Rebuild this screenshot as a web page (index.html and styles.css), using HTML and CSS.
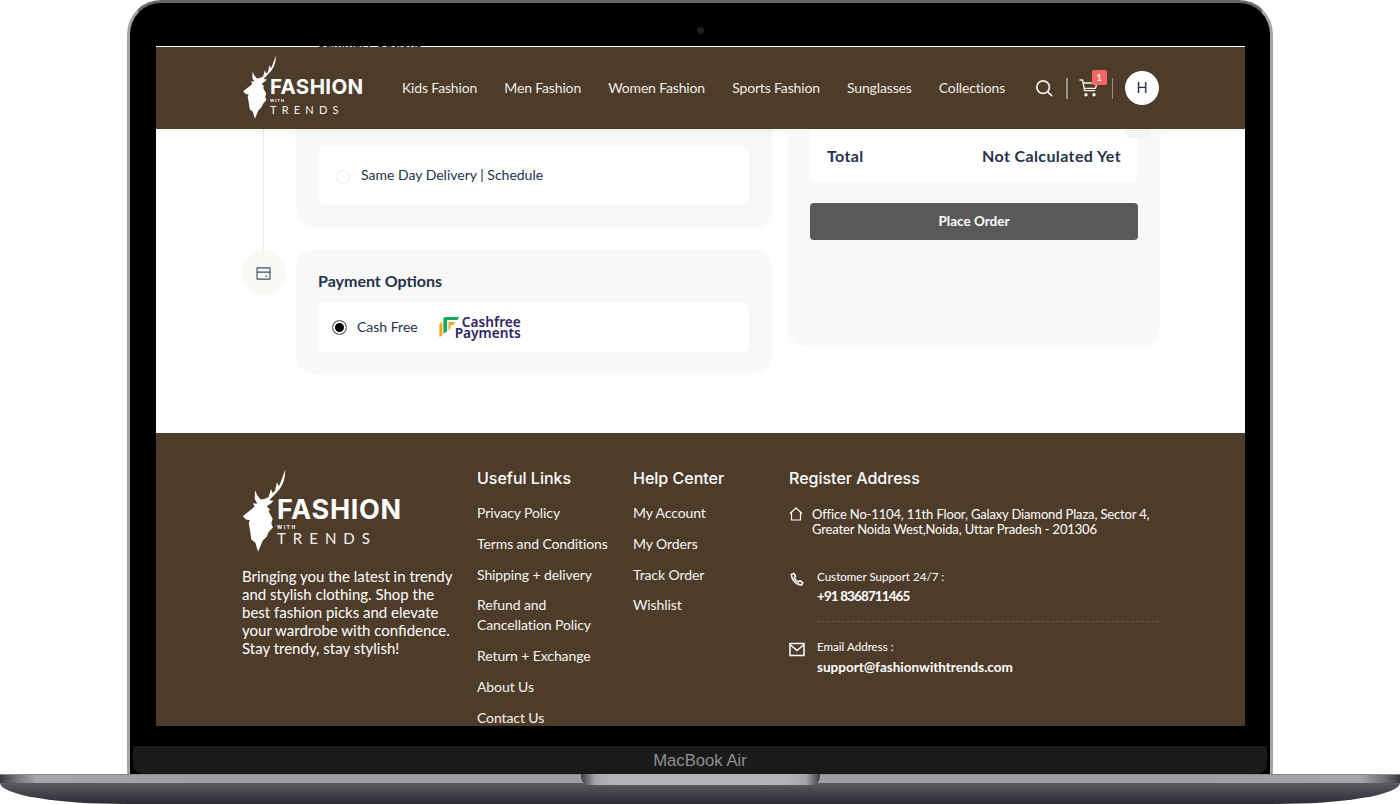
FILE: index.html
```html
<!DOCTYPE html>
<html lang="en">
<head>
<meta charset="utf-8">
<title>Fashion With Trends</title>
<link rel="stylesheet" href="styles.css">
</head>
<body>
<svg class="defs" width="0" height="0" aria-hidden="true">
  <symbol id="deer" viewBox="38 28 132 250">
    <path d="M168 30C168 50 164 72 150 90C142 100 130 112 120 122L133 124L125 132L112 140L122 150L118 156L130 178L126 192L131 204L118 218L112 232L100 244L86 277L78 250L66 240L62 215L58 190L62 182L50 180L40 170L55 158L68 148L76 140L70 132L84 132L76 118L77 92L84 108L94 120L105 118L118 112L125 88L130 100L137 94L143 68L149 80L155 66Z" fill="#fff"/>
  </symbol>
</svg>
<main class="device">
  <section class="lid">
    <span class="camera"></span>
    <div class="screen">
      <div class="peek"><span class="peek-text">Summary Options</span></div>
      <header class="site-header">
        <a class="logo logo-small">
          <svg class="deer"><use href="#deer"/></svg>
          <span class="logo-words">
            <span class="logo-main">FASHION</span>
            <span class="logo-with">WITH</span>
            <span class="logo-trends">TRENDS</span>
          </span>
        </a>
        <nav class="main-nav">
          <a>Kids Fashion</a><a>Men Fashion</a><a>Women Fashion</a><a>Sports Fashion</a><a>Sunglasses</a><a>Collections</a>
        </nav>
        <div class="header-tools">
          <svg class="tool-icon" viewBox="0 0 20 20" fill="none" stroke="#f4f1ec" stroke-width="1.9" stroke-linecap="round"><circle cx="9" cy="9" r="7"/><path d="M14.5 14.5l4 4"/></svg>
          <span class="tool-sep"></span>
          <span class="cart">
            <svg class="tool-icon" viewBox="0 0 20 20" fill="none" stroke="#f4f1ec" stroke-width="1.4" stroke-linecap="round" stroke-linejoin="round"><path d="M1 2h2.6l2 10.6h10"/><path d="M4.2 5H18l-1.6 5.4H5.4"/><circle cx="7" cy="16.8" r="1" fill="#f4f1ec"/><circle cx="15" cy="16.8" r="1" fill="#f4f1ec"/></svg>
            <span class="cart-badge">1</span>
          </span>
          <span class="tool-sep"></span>
          <span class="avatar">H</span>
        </div>
      </header>

      <div class="checkout">
        <div class="timeline">
          <span class="timeline-line"></span>
          <span class="timeline-dot">
            <svg class="card-icon" viewBox="0 0 16 14" fill="none" stroke="#3c4a63" stroke-width="1.2"><rect x="1" y="1" width="14" height="12" rx=".4"/><path d="M1 5.5h14M10 10h2"/></svg>
          </span>
        </div>
        <div class="steps">
          <div class="step step-delivery">
            <div class="option-row">
              <span class="radio"></span>
              <span class="option-label">Same Day Delivery | Schedule</span>
            </div>
          </div>
          <div class="step step-payment">
            <h2 class="step-title">Payment Options</h2>
            <div class="pay-row">
              <span class="radio-on"></span>
              <span class="pay-label">Cash Free</span>
              <span class="cashfree">
                <svg class="cf-mark" viewBox="12 14 62 62"><path d="M13 38L22 30V72L13 76Z" fill="#f9a51c"/><path d="M25 22L28 17H72L66 26H36V60L25 66Z" fill="#13a85a"/><path d="M40 32H60L55 40H46V52L40 56Z" fill="#f9a51c"/></svg>
                <span class="cf-words"><span>Cashfree</span><span>Payments</span></span>
              </span>
            </div>
          </div>
        </div>
        <aside class="summary">
          <div class="total-row"><span>Total</span><span>Not Calculated Yet</span></div>
          <button class="place-order">Place Order</button>
        </aside>
      </div>

      <footer class="site-footer">
        <div class="foot-brand">
          <a class="logo logo-large">
            <svg class="deer"><use href="#deer"/></svg>
            <span class="logo-words">
              <span class="logo-main">FASHION</span>
              <span class="logo-with">WITH</span>
              <span class="logo-trends">TRENDS</span>
            </span>
          </a>
          <p class="foot-blurb">Bringing you the latest in trendy and stylish clothing. Shop the best fashion picks and elevate your wardrobe with confidence. Stay trendy, stay stylish!</p>
        </div>
        <div class="foot-col">
          <h3>Useful Links</h3>
          <ul>
            <li>Privacy Policy</li><li>Terms and Conditions</li><li>Shipping + delivery</li><li>Refund and Cancellation Policy</li><li>Return + Exchange</li><li>About Us</li><li>Contact Us</li>
          </ul>
        </div>
        <div class="foot-col">
          <h3>Help Center</h3>
          <ul>
            <li>My Account</li><li>My Orders</li><li>Track Order</li><li>Wishlist</li>
          </ul>
        </div>
        <div class="foot-col foot-contact">
          <h3>Register Address</h3>
          <div class="address">
            <svg class="ico-home" viewBox="0 0 14 14" fill="none" stroke="#fff" stroke-width="1.2" stroke-linejoin="round"><path d="M1 6.5L7 1l6 5.5M2.5 5.5V13h9V5.5"/></svg>
            <p>Office No-1104, 11th Floor, Galaxy Diamond Plaza, Sector 4, Greater Noida West,Noida, Uttar Pradesh - 201306</p>
          </div>
          <div class="contact contact-phone">
            <svg class="ico-contact" viewBox="0 0 16 16" fill="none" stroke="#fff" stroke-width="1.6" stroke-linejoin="round"><path d="M2 2.6L4.6 1.4l2 3.2-1.5 1.5c.7 1.9 2.3 3.6 4.4 4.6l1.5-1.4 3.2 2.1-1.2 2.4c-5.8.2-10.9-5.4-11-11.2z"/></svg>
            <div>
              <div class="contact-label">Customer Support 24/7 :</div>
              <div class="contact-value contact-number">+91 8368711465</div>
            </div>
          </div>
          <div class="contact contact-mail">
            <svg class="ico-contact" viewBox="0 0 16 14" fill="none" stroke="#fff" stroke-width="1.5"><rect x="1" y="1" width="14" height="12"/><path d="M1 2l7 6 7-6"/></svg>
            <div>
              <div class="contact-label">Email Address :</div>
              <div class="contact-value">support@fashionwithtrends.com</div>
            </div>
          </div>
        </div>
      </footer>
    </div>
    <div class="bezel-gap"></div>
    <div class="chin">MacBook Air</div>
  </section>
  <section class="base">
    <div class="base-top"></div>
    <div class="base-bottom"></div>
    <div class="notch"></div>
  </section>
</main>
</body>
</html>
```
FILE: styles.css
```css
* { box-sizing: border-box; }
html, body { margin: 0; padding: 0; background: #fff; }
body { font-family: "Lato", "Liberation Sans", sans-serif; width: 1400px; height: 804px; overflow: hidden; }
.defs { position: absolute; }
h2, h3, p, ul { margin: 0; padding: 0; }
ul { list-style: none; }

.device { width: 1400px; height: 804px; display: flex; flex-direction: column; }

/* lid */
.lid {
  position: relative;
  width: 1146px;
  height: 774px;
  margin-left: 127px;
  padding: 43px 25px 0 26px;
  background: #000;
  border: 3px solid #6d6e74;
  border-bottom: 0;
  border-radius: 34px 34px 0 0;
  border-left-color: #a4a5a9;
  border-right-color: #a4a5a9;
  border-top-color: #66676d;
}
.camera {
  position: absolute;
  left: 567px;
  top: 24px;
  width: 7px;
  height: 7px;
  border-radius: 50%;
  background: #1c1f2a;
}
.screen { width: 1089px; height: 680px; overflow: hidden; background: #fff; display: flex; flex-direction: column; }
.peek { height: 1px; flex: none; overflow: hidden; background: #fff; padding-left: 162px; }
.peek-text { display: block; font-size: 13px; font-weight: 700; line-height: 13px; margin-top: -10px; color: #25324a; }
.bezel-gap { height: 20px; }
.chin {
  height: 28px;
  margin: 0 -22px 0 -23px;
  background: #1a1a1a;
  border-radius: 0 0 10px 10px;
  color: #8f8f92;
  font: 16.7px/30px "Liberation Sans", sans-serif;
  text-align: center;
}

/* base */
.base { position: relative; width: 1400px; height: 30px; flex: none; }
.base-top {
  height: 9px;
  background: linear-gradient(90deg, #3a3b40 0, #66676c 12px, #a6a6aa 36px, #9d9ea3 200px, #9d9ea3 1200px, #a6a6aa 1360px, #66676c 1388px, #3a3b40 100%);
  border-top: 1px solid #8a8b90;
}
.base-bottom {
  height: 21px;
  background: linear-gradient(180deg, #5c5d63 0, #494a51 35%, #2b2c34 100%);
  border-radius: 0 0 125px 125px / 0 0 21px 21px;
}
.notch {
  position: absolute;
  left: 581px;
  top: 0;
  width: 239px;
  height: 11px;
  background: linear-gradient(90deg, #3e3f44 0, #a4a4a8 14px, #b4b4b8 30px, #b4b4b8 205px, #a4a4a8 225px, #3e3f44 100%);
  border-radius: 0 0 8px 8px;
}

/* logo */
.logo { display: flex; color: #fff; flex: none; }
.logo-words { display: flex; flex-direction: column; font-family: "Inter", sans-serif; }
.logo-main { font-weight: 700; }
.logo-with { font-weight: 700; }
.logo-trends { font-weight: 400; color: #f5f2ee; font-family: "Lato", sans-serif; }
.deer { display: block; flex: none; }

.logo-small { width: 129px; }
.logo-small .deer { width: 35px; height: 64px; }
.logo-small .logo-words { margin: 22px 0 0 -7px; }
.logo-small .logo-main { font-size: 20.5px; line-height: 20px; letter-spacing: .35px; }
.logo-small .logo-with { font-size: 4px; line-height: 5px; letter-spacing: 1px; margin-top: 1px; }
.logo-small .logo-trends { font-size: 11px; line-height: 11px; letter-spacing: 5.2px; margin-top: 1px; }

.logo-large { width: 190px; }
.logo-large .deer { width: 44px; height: 83px; }
.logo-large .logo-words { margin: 27px 0 0 -9px; }
.logo-large .logo-main { font-size: 27px; line-height: 27px; letter-spacing: .7px; }
.logo-large .logo-with { font-size: 5px; line-height: 6px; letter-spacing: 1.5px; margin-top: 1px; }
.logo-large .logo-trends { font-size: 15px; line-height: 15px; letter-spacing: 7px; margin-top: 1px; }

/* header */
.site-header {
  height: 82px;
  flex: none;
  background: #4e3c2b;
  padding: 8px 86px 0;
  display: flex;
  align-items: flex-start;
  position: relative;
  box-shadow: 0 2px 8px rgba(0,0,0,.06);
}
.main-nav { display: flex; gap: 27.1px; margin: 23px 0 0 31px; font-size: 14px; line-height: 20px; letter-spacing: -.15px; color: #efebe5; white-space: nowrap; }
.header-tools { margin: 16px 0 0 auto; display: flex; align-items: center; height: 34px; }
.tool-icon { width: 18px; height: 18px; display: block; }
.tool-sep { width: 1.5px; height: 21px; background: #9a9084; margin: 0 12px 0 13px; }
.cart { position: relative; display: block; width: 20px; height: 20px; margin-left: -1px; }
.cart .tool-icon { width: 20px; height: 20px; }
.cart-badge {
  position: absolute;
  left: 13px;
  top: -8px;
  width: 15px;
  height: 15px;
  border-radius: 2px;
  background: #f76565;
  color: #fff;
  font-size: 9px;
  font-weight: 700;
  line-height: 15px;
  text-align: center;
}
.avatar {
  width: 34px;
  height: 34px;
  border-radius: 50%;
  background: #fff;
  color: #25324a;
  font: 15px/34px "Inter", sans-serif;
  text-align: center;
}

/* checkout */
.checkout {
  height: 304px;
  flex: none;
  padding: 0 86px;
  display: flex;
  overflow: hidden;
}
.timeline { width: 44px; flex: none; display: flex; flex-direction: column; align-items: center; margin-right: 11px; }
.timeline-line { height: 121px; border-left: 1px dotted #d4d4d4; margin-left: -1px; }
.timeline-dot { width: 44px; height: 45px; border-radius: 50%; background: #f8f8f5; display: flex; align-items: center; justify-content: center; }
.card-icon { width: 15px; height: 13px; display: block; margin: 1px 2px 0 0; }

.steps { width: 474px; flex: none; margin-right: 18px; display: flex; flex-direction: column; gap: 23px; }
.step { background: #f8f8f8; border-radius: 0 0 16px 16px; padding: 0 22px 0 21px; box-shadow: 0 0 4px rgba(0,0,0,.03); }
.step-delivery { height: 98px; padding-top: 17px; }
.step-payment { height: 123px; border-radius: 16px; padding-top: 21px; }
.option-row {
  height: 59px;
  background: #fff;
  border-radius: 8px;
  padding: 0 0 2px 18px;
  display: flex;
  align-items: center;
  gap: 11px;
}
.radio { width: 14px; height: 14px; border-radius: 50%; border: 1px solid #ededed; background: #fff; flex: none; margin-top: 4px; }
.option-label { font-size: 14px; color: #25324a; }
.step-title { font-size: 16px; font-weight: 700; line-height: 20px; color: #25324a; margin-bottom: 11px; }
.pay-row {
  height: 50px;
  background: #fff;
  border-radius: 8px;
  padding: 0 0 2px 14px;
  display: flex;
  align-items: center;
}
.radio-on {
  width: 15px;
  height: 15px;
  border-radius: 50%;
  border: 1px solid #767676;
  background: #000;
  box-shadow: inset 0 0 0 2px #fff;
  flex: none;
  margin: 3px 10px 0 0;
}
.pay-label { font-size: 14px; color: #25324a; margin-right: 21px; }
.cashfree { display: flex; align-items: center; }
.cf-mark { width: 21px; height: 21px; display: block; margin-top: 1px; }
.cf-words { display: flex; flex-direction: column; font: 600 13.7px/11px "Noto Sans", sans-serif; color: #2f2463; text-align: right; margin: 2px 0 0 -5px; }

.summary {
  position: relative;
  width: 370px;
  height: 217px;
  flex: none;
  background: #f8f8f8;
  border-radius: 0 0 16px 16px;
  padding: 0 21px;
  box-shadow: 0 0 4px rgba(0,0,0,.03);
}
.summary::before {
  content: "";
  position: absolute;
  left: 336px;
  top: 0;
  width: 25px;
  height: 9px;
  background: #f2f2ee;
  border-radius: 0 0 8px 8px;
}
.total-row {
  height: 54px;
  background: #fff;
  border-radius: 0 0 8px 8px;
  padding: 0 17px 2px;
  display: flex;
  justify-content: space-between;
  align-items: center;
  font-size: 16px;
  font-weight: 700;
  letter-spacing: .38px;
  color: #25324a;
}
.place-order {
  display: block;
  width: 100%;
  height: 37px;
  margin-top: 20px;
  padding: 0 0 1px;
  border: 0;
  border-radius: 4px;
  background: #595959;
  color: #fff;
  font: 700 13.5px/36px "Lato", sans-serif;
  text-align: center;
}

/* footer */
.site-footer {
  height: 293px;
  flex: none;
  background: #4e3c2b;
  padding: 35px 86px 0;
  display: grid;
  grid-template-columns: 235px 156px 156px 370px;
  color: #fff;
  overflow: hidden;
}
.foot-brand { padding-top: 1px; }
.foot-blurb { width: 216px; margin-top: 15px; font-size: 15px; line-height: 18px; }
.foot-col h3 { font: 500 16px/20px "Inter", sans-serif; margin-bottom: 15px; }
.foot-col ul { display: flex; flex-direction: column; gap: 10.8px; font-size: 14px; line-height: 20px; letter-spacing: -.1px; width: 135px; color: #f7f4f0; }
.address { display: flex; gap: 9px; margin-top: 19px; }
.ico-home { width: 14px; height: 14px; margin-top: 0; flex: none; }
.address p { font-size: 13px; letter-spacing: -.15px; line-height: 15px; width: 345px; }
.contact { display: flex; gap: 12px; }
.contact-phone { position: relative; margin-top: 32px; padding-bottom: 17px; }
.contact-phone::after { content: ""; position: absolute; left: 28px; right: 0; bottom: 0; border-bottom: 1px dashed #6a5848; }
.contact-mail { padding-top: 17px; }
.ico-contact { width: 16px; height: 15px; margin-top: 3px; flex: none; }
.contact-label { font-size: 11.6px; line-height: 16px; }
.contact-value { font-size: 13.5px; font-weight: 700; line-height: 18px; margin-top: 3px; }
.contact-number { font-size: 13.5px; letter-spacing: -.9px; margin-top: 2px; }
```
